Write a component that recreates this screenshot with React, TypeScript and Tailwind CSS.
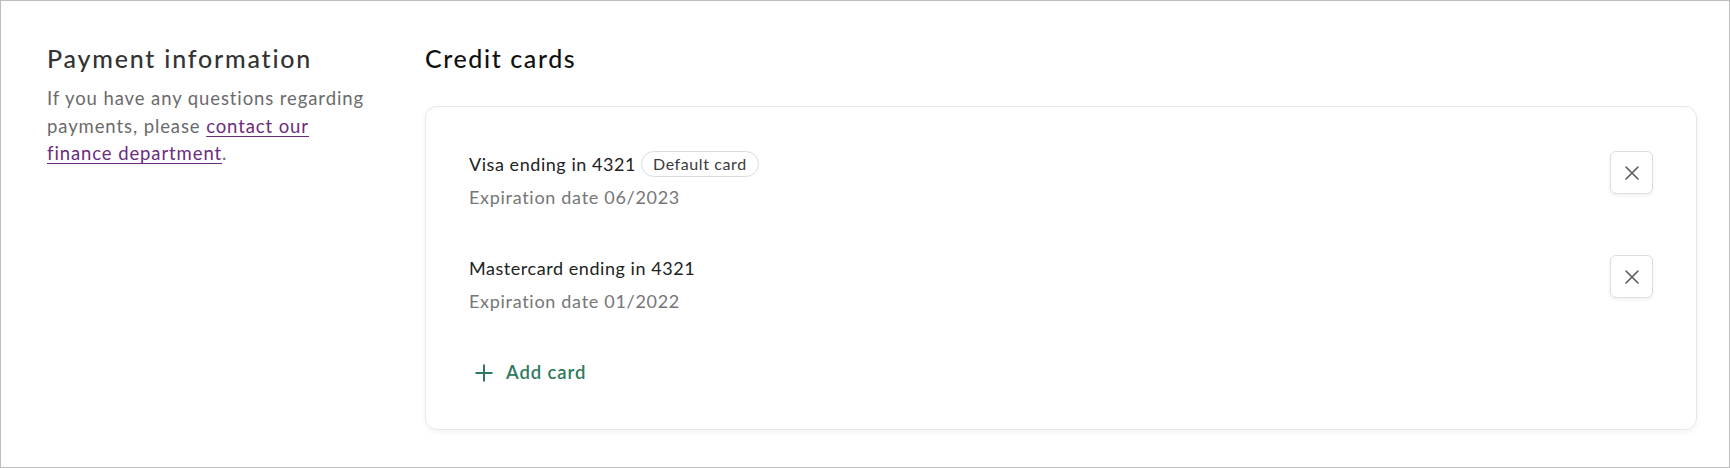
import React from "react";

const font = { fontFamily: '"Lato", "Noto Sans", sans-serif' };

function XIcon() {
  return (
    <svg width="16" height="16" viewBox="0 0 16 16" fill="none" stroke="#5a5a5a" strokeWidth="1.6" strokeLinecap="round">
      <path d="M2 2 L14 14 M14 2 L2 14" />
    </svg>
  );
}

function PlusIcon() {
  return (
    <svg width="18" height="18" viewBox="0 0 18 18" fill="none" stroke="#2e7a5c" strokeWidth="2">
      <path d="M9 0.5 V17.5 M0.5 9 H17.5" />
    </svg>
  );
}

function CardRow({ title, exp, isDefault }: { title: string; exp: string; isDefault?: boolean }) {
  return (
    <div className="flex items-start justify-between">
      <div className="flex flex-col gap-[7px]">
        <div className="flex h-[26px] items-center gap-[5px]">
          <span className="text-[18px] leading-[27px] tracking-[0.55px] text-[#222]">{title}</span>
          {isDefault && (
            <span className="flex h-[26px] items-center rounded-full border border-[#dcdcdc] px-[11px] text-[16px] tracking-[0.6px] text-[#3a3a3a]">
              Default card
            </span>
          )}
        </div>
        <div className="text-[18px] leading-[27px] tracking-[0.7px] text-[#767676]">{exp}</div>
      </div>
      <button className="flex h-[43px] w-[43px] items-center justify-center rounded-[6px] border border-[#dedede] bg-white shadow-[0_2px_4px_rgba(0,0,0,0.06)]">
        <XIcon />
      </button>
    </div>
  );
}

export default function App() {
  return (
    <div style={font} className="box-border h-[468px] w-[1730px] border border-[#bdbdbd] bg-white">
      <div className="flex pl-[46px] pr-[32px] pt-[40px]">
        <div className="w-[378px] shrink-0 pr-[20px]">
          <h2 className="whitespace-nowrap text-[25px] font-medium leading-[34px] tracking-[1.8px] text-[#333]">
            Payment information
          </h2>
          <p className="mt-[10px] whitespace-nowrap text-[18.5px] leading-[27.5px] tracking-[0.9px] text-[#6b6b6b]">
            If you have any questions regarding
            <br />
            payments, please{" "}
            <a href="#" className="text-[#6b2c7e] underline decoration-1 underline-offset-[3px]">
              contact our
              <br />
              finance department
            </a>
            .
          </p>
        </div>
        <div className="flex-1">
          <h2 className="text-[25px] font-medium leading-[34px] tracking-[1.6px] text-[#111]">Credit cards</h2>
          <div className="mt-[31px] flex flex-col gap-[44px] rounded-[12px] border border-[#e6e6e6] px-[43px] pb-[43px] pt-[44px] shadow-[0_2px_6px_rgba(0,0,0,0.05)]">
            <CardRow title="Visa ending in 4321" exp="Expiration date 06/2023" isDefault />
            <CardRow title="Mastercard ending in 4321" exp="Expiration date 01/2022" />
            <button className="flex h-[27px] items-center gap-[13px] self-start pl-[6px] text-[18.5px] font-semibold tracking-[0.9px] text-[#2e7a5c]">
              <PlusIcon />
              Add card
            </button>
          </div>
        </div>
      </div>
    </div>
  );
}
